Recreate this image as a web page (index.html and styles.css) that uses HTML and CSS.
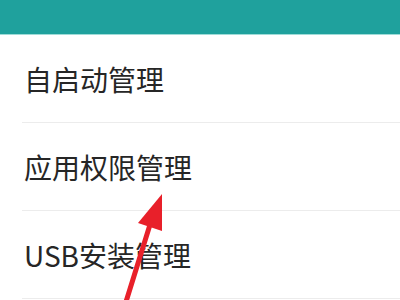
FILE: index.html
```html
<!DOCTYPE html>
<html lang="zh">
<head>
<meta charset="utf-8">
<link rel="stylesheet" href="styles.css">
</head>
<body>
<div class="screen">
  <div class="topbar"></div>
  <ul class="menu">
    <li class="item"><span class="label">自启动管理</span></li>
    <li class="item"><span class="label">应用权限管理</span></li>
    <li class="item"><span class="label">USB安装管理</span></li>
  </ul>
  <svg class="arrow" width="400" height="300" viewBox="0 0 400 300">
    <line x1="125" y1="305" x2="153" y2="215" stroke="#e8202a" stroke-width="5" stroke-linecap="round"/>
    <polygon points="162,194 138,223 162,231" fill="#e8202a"/>
  </svg>
</div>
</body>
</html>
```
FILE: styles.css
```css
html, body {
  margin: 0;
  padding: 0;
  background: #ffffff;
}
.screen {
  position: relative;
  width: 400px;
  height: 300px;
  overflow: hidden;
  font-family: "Noto Sans CJK SC", "Noto Sans", sans-serif;
}
.topbar {
  height: 34px;
  background: #1fa19d;
  border-bottom: 1px solid #9fdcd8;
}
.menu {
  list-style: none;
  margin: 0;
  padding: 0;
}
.item {
  height: 87px;
  margin-left: 22px;
  border-bottom: 1px solid #ececec;
  display: flex;
  align-items: center;
}
.label {
  padding-left: 2px;
  font-size: 28px;
  color: #262626;
  line-height: 1;
}
.arrow {
  position: absolute;
  left: 0;
  top: 0;
}
```
